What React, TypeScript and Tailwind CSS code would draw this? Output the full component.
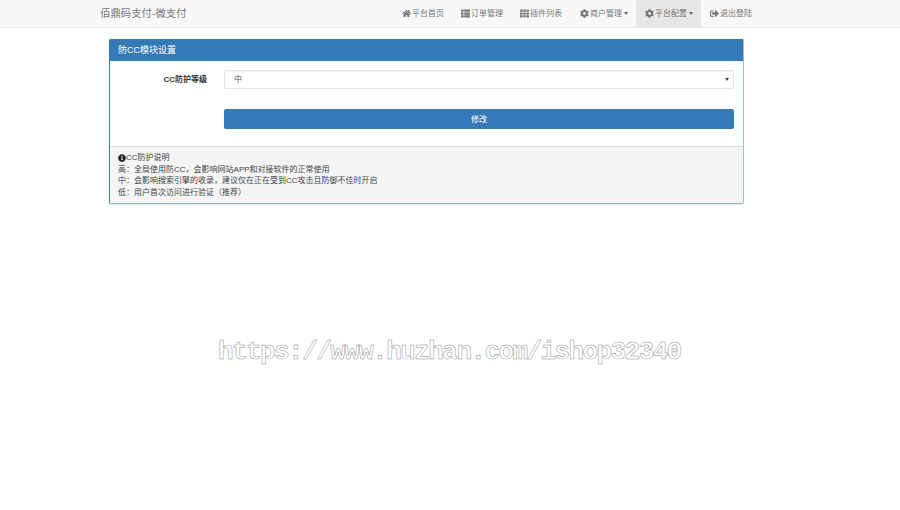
import React from "react";
import { FaCog, FaHome, FaTh, FaThList, FaSignOutAlt, FaInfoCircle } from "react-icons/fa";

const navItems = [
  { label: "平台首页", icon: FaHome, width: "w-[59px]" },
  { label: "订单管理", icon: FaThList, width: "w-[59px]" },
  { label: "插件列表", icon: FaTh, width: "w-[60px]" },
  { label: "商户管理", icon: FaCog, width: "w-[65px]", caret: true },
  { label: "平台配置", icon: FaCog, width: "w-[65px]", caret: true, active: true },
  { label: "退出登陆", icon: FaSignOutAlt, width: "w-[60px]" },
];

const Caret = () => (
  <span className="ml-[2px] border-x-[2.5px] border-t-[3px] border-x-transparent border-t-[#666]" />
);

const App: React.FC = () => {
  return (
    <div className="relative min-h-[510px] bg-white font-['Liberation_Sans','Noto_Sans_CJK_SC',sans-serif] text-[8px] text-[#444]">
      <nav className="flex h-[28px] border-b border-[#e7e7e7] bg-[#f8f8f8] pl-[100px]">
        <a className="w-[86px] whitespace-nowrap text-[10.4px] leading-[27px] text-[#777]">佰鼎码支付-微支付</a>
        <ul className="ml-[207px] flex">
          {navItems.map((item) => (
            <li
              key={item.label}
              className={`flex h-[27px] items-center pl-[9px] text-[#777] ${item.width} ${
                item.active ? "bg-[#e7e7e7] text-[#555]" : ""
              }`}
            >
              <item.icon className="mr-[1px] h-[9px] w-[9px] shrink-0" />
              <span className="whitespace-nowrap">{item.label}</span>
              {item.caret && <Caret />}
            </li>
          ))}
        </ul>
      </nav>

      <main className="ml-[109px] mt-[11px] w-[635px]">
        <section className="rounded-[2px] border border-[#337ab7] border-r-[#9dbdd9] border-b-[#9db4c9] shadow-[0_1px_1px_rgba(0,0,0,0.1)]">
          <h3 className="flex h-[21px] items-center bg-[#337ab7] pl-[8px] text-[9px] font-normal text-white">
            防CC模块设置
          </h3>
          <div className="bg-white pb-[17px] pl-[114px] pr-[9px] pt-[9px]">
            <div className="relative flex h-[19px] items-center justify-between rounded-[2px] border border-[#e4e4e4] pl-[9px] pr-[4px] text-[#555] shadow-[inset_0_1px_1px_rgba(0,0,0,0.05)]">
              <label className="absolute right-[calc(100%+18px)] whitespace-nowrap font-bold text-[#333]">
                CC防护等级
              </label>
              <span className="pt-[1px]">中</span>
              <span className="border-x-[2px] border-t-[3px] border-x-transparent border-t-[#444]" />
            </div>
            <button className="mt-[20px] block h-[20px] w-full rounded-[2px] bg-[#337ab7] pt-[1px] text-[8px] text-white">
              修改
            </button>
          </div>
          <div className="border-t border-[#ddd] bg-[#f5f5f5] px-[8px] pb-[5px] pt-[5px] leading-[11.5px]">
            <div className="flex items-center">
              <FaInfoCircle className="h-[8px] w-[8px] text-[#222]" />
              <span>CC防护说明</span>
            </div>
            <div>高：全局使用防CC，会影响网站APP和对接软件的正常使用</div>
            <div>中：会影响搜索引擎的收录，建议仅在正在受到CC攻击且防御不佳时开启</div>
            <div>低：用户首次访问进行验证（推荐）</div>
          </div>
        </section>
      </main>

      <div className="absolute left-[218px] top-[335px] whitespace-nowrap font-['Liberation_Mono',monospace] text-[26px] font-bold leading-[34px] tracking-[-1.58px] text-white opacity-[0.99] [-webkit-text-stroke:0.5px_#8f8f8f]">
        https://www.huzhan.com/ishop32340
      </div>
    </div>
  );
};

export default App;
